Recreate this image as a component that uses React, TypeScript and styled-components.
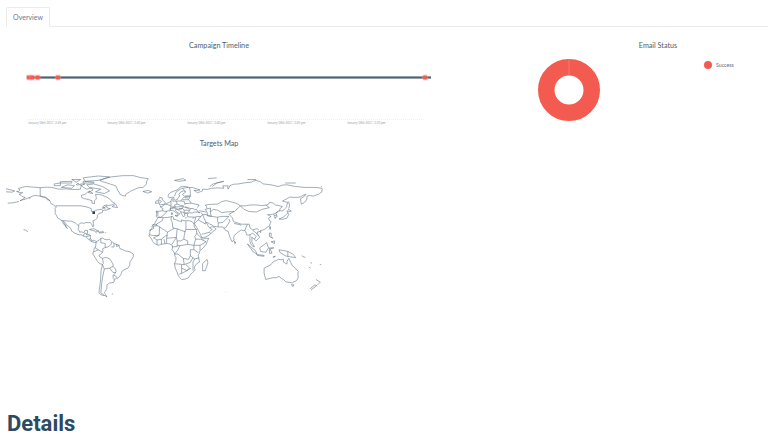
import React from 'react';
import styled, { createGlobalStyle } from 'styled-components';

const GlobalStyle = createGlobalStyle`
  html, body {
    margin: 0;
    padding: 0;
    height: 440px;
    overflow: hidden;
    background: #fff;
    font-family: Lato, "Open Sans", "Liberation Sans", sans-serif;
    color: #4a5b69;
  }
`;

const Page = styled.div`
  width: 768px;
  height: 440px;
  overflow: hidden;
`;

const TabBar = styled.div`
  display: flex;
  height: 27px;
  margin-left: 6px;
  padding-top: 7px;
  box-sizing: border-box;
  border-bottom: 1px solid #e8eaec;
`;

const Tab = styled.div`
  width: 44px;
  height: 20px;
  box-sizing: border-box;
  border: 1px solid #e8eaec;
  border-bottom: 1px solid #fff;
  border-radius: 2px 2px 0 0;
  background: #fff;
  font-size: 7px;
  line-height: 19px;
  text-align: center;
  color: #70797f;
`;

const ChartRow = styled.div`
  display: grid;
  grid-template-columns: 438px 330px;
  padding-top: 14px;
  height: 95px;
`;

const ChartTitle = styled.div<{ $offset?: number }>`
  height: 10px;
  padding-left: ${(p) => p.$offset ?? 0}px;
  font-size: 7.2px;
  line-height: 10px;
  text-align: center;
  color: #4f606e;
`;

const Plot = styled.svg`
  display: block;
`;

const DonutRow = styled.div`
  display: flex;
  align-items: flex-start;
  padding: 7px 0 0 99px;
`;

const Legend = styled.div`
  display: flex;
  align-items: center;
  gap: 4px;
  margin: 3px 0 0 103px;
  font-size: 5.2px;
  line-height: 8px;
  color: #5f6e7b;
`;

const LegendDot = styled.span`
  width: 8px;
  height: 8px;
  border-radius: 50%;
  background: #f35b50;
`;

const MapSection = styled.section`
  padding-top: 3px;
  width: 438px;
`;

const MapCanvas = styled.svg`
  display: block;
  margin-top: 21px;
  fill: none;
  stroke: #566b7d;
  stroke-width: 0.55;
  stroke-linejoin: round;
`;

const Heading = styled.h1`
  margin: 105px 0 0 7px;
  font-family: Roboto, "Liberation Sans", sans-serif;
  font-size: 22px;
  line-height: 28px;
  font-weight: 700;
  color: #2b4a63;
`;

const ticks = [
  { x: 28, label: 'January 18th 2017, 2:45 pm' },
  { x: 107, label: 'January 18th 2017, 2:50 pm' },
  { x: 187, label: 'January 18th 2017, 3:00 pm' },
  { x: 267, label: 'January 18th 2017, 3:05 pm' },
  { x: 347, label: 'January 18th 2017, 3:10 pm' },
];

const events = [29, 32.3, 37.7, 58, 425];

const Timeline = () => (
  <Plot width={438} height={79} viewBox="0 51 438 79">
    <rect x={26} y={76.5} width={3} height={2} fill="#c9ced2" />
    <rect x={28} y={76.4} width={403} height={2.2} fill="#4f6272" />
    {events.map((x) => (
      <g key={x}>
        <rect x={x - 3} y={74.5} width={6} height={6} rx={1} fill="#f9a8a1" opacity={0.4} />
        <rect x={x - 2} y={75.5} width={4} height={4} rx={0.8} fill="#f35b50" />
      </g>
    ))}
    <line x1={27} x2={424} y1={119.5} y2={119.5} stroke="#e3e6e8" strokeWidth={0.6} strokeDasharray="1 1" />
    {ticks.map((t) => (
      <text key={t.x} x={t.x} y={123.5} fontSize={3.1} fill="#98a2aa">
        {t.label}
      </text>
    ))}
  </Plot>
);

const Donut = () => (
  <Plot width={64} height={64} viewBox="0 0 64 64">
    <circle cx={32} cy={32} r={22.75} fill="none" stroke="#f35b50" strokeWidth={16.5} />
    <line x1={32} x2={32} y1={1} y2={17} stroke="#f8a49d" strokeWidth={0.4} />
  </Plot>
);

// plate carree: lon/lat traced by hand, scaled to the plot
const px = (lon: number) => 164 + lon * 0.878;
const py = (lat: number) => 248.8 - lat * 0.877;

const coasts = [
  // north america
  '-168,65.5 -164,67 -166,68.5 -157,71 -141,69.7 -128,70 -115,68 -108,68 -95,68 -94,72 -88,68 -82,69 -81,67 -87,64.5 -94,61 -94,58.7 -88,56.5 -82,55 -82,52 -79,51.5 -79,55 -77,57 -78,62 -70,61 -65,59 -60,55 -56,52 -60,50 -66,50 -70,47 -65,49 -65,47 -61,46 -66,44 -70,43.5 -70,41.5 -74,40.5 -76,38 -76,35 -81,32 -80,27 -81,25 -82.5,28 -84,30 -89,30 -94,29.5 -97,27.5 -98,22 -96,19 -91,18.5 -90,21 -87,21 -88,16 -84,15.5 -83.5,11 -81,9 -79,9.5 -77,8 -78,7 -80,7.5 -83,8.3 -86,11 -88,13 -92,14.5 -96,16 -102,18 -105,20 -106,23 -109,26 -112,29 -114.5,31.5 -112.5,27 -110,23 -112,25 -115,29 -117,32.5 -120.5,34.5 -122,37 -124,40 -124,46 -122.5,48 -125,49 -128,51 -130,55 -134,58 -140,60 -147,61 -152,59 -158,56.5 -164,54.7 -158,58.5 -162,60 -165,62 -161,64 -168,65.5',
  '-123,49 -95,49 -89,48 -83,46 -82.5,42.5 -79,43 -76,44.5 -71,45 -67.5,47 -67,45',
  '-141,69.7 -141,60 -135,59 -130,55',
  '-117,32.5 -108,31.5 -106,31.7 -101,29.5 -97,26',
  '-92,14.5 -91,17 -89,18 -88,16',
  '-89,14 -83.5,15',
  '-85.5,11 -83.7,11',
  '-83,8.3 -83,10',
  // south america
  '-77,8 -72,12 -68,11 -62,10.5 -57,6 -51,4 -50,0 -44,-2.5 -39,-3.5 -35,-6 -35,-9 -39,-15 -39,-18 -41,-22 -48,-25.5 -49,-29 -53,-33.5 -57,-34.5 -57,-38 -62,-39 -65,-41 -65,-45 -68,-50 -65,-55 -70,-53 -74,-50 -73,-42 -72,-30 -70,-18 -76,-14 -81,-6 -80,-2 -78,2 -77,8',
  '-72,12 -72,7 -67,6 -67,1.5',
  '-60,8 -60,5 -64,2 -67,1.5 -70,0 -70,-4 -74,-7.5 -73,-9.5 -70,-11 -65,-10 -60,-14 -58,-17 -58,-20 -55,-24 -54.5,-26 -57.5,-30 -53,-33.5',
  '-57,6 -57,2 -60,2',
  '-54,5.5 -54,2.5 -51,4',
  '-80,-3.5 -75,-1 -79,1.5',
  '-70,-4 -75,-1',
  '-70,-18 -68,-23 -70,-33 -71,-40 -72,-50 -68,-53',
  '-70,-11 -69,-17 -70,-18',
  '-68,-23 -62,-22 -58,-20',
  '-62,-22 -58,-27 -55,-27',
  '-58,-34 -58,-30',
  // greenland, arctic canada
  '-73,78 -60,82 -35,83.5 -18,80 -20,74 -24,70 -33,68 -42,63 -44,60 -50,62 -53,67 -55,72 -68,76 -73,78',
  '-62,66 -68,63 -78,65 -72,68 -85,70 -88,73 -80,74 -70,71 -62,66',
  '-117,70 -105,69 -102,72 -110,73 -117,70',
  '-125,72 -118,72 -118,75 -125,74 -125,72',
  '-90,77 -75,78 -62,82 -75,83 -92,81 -90,77',
  '-92,75 -80,75 -80,76 -92,77 -92,75',
  '-118,75 -105,75 -105,77 -118,76.5 -118,75',
  '-100,76 -95,79 -105,79 -100,76',
  '-95,72 -90,74 -95,74 -95,72',
  '-100,73 -96,73 -98,75 -100,73',
  '-86,64 -81,63 -85,66 -86,64',
  '-59,48 -53,47 -55,51 -59,48',
  // caribbean, pacific
  '-85,22 -80,23 -74,20 -78,20 -85,22',
  '-74,19 -69,19.5 -68.5,18.5 -74,18 -74,19',
  '-78,18.5 -76.5,18',
  '-67,18.4 -65.8,18.2',
  '-160,22 -158,21.4 -155,19.5',
  '-178,52 -172,52.5 -165,54',
  '-154,57.5 -152,58',
  '-180,68.5 -170,66 -173,64.5 -180,65',
  '-59.5,-51.5 -58,-51.5',
  // atlantic isles
  '-24,65.5 -18,66.5 -14,65 -19,63.5 -24,65.5',
  '-5,50 1,51 1.5,53 -2,56 -2,58 -5,58.5 -6,56 -3,54 -5,52 -5,50',
  '-10,52 -6,52 -6,55 -9,54.5 -10,52',
  // africa
  '-6,36 -1,35.5 10,37 11,33.5 15,32.5 20,31 20,33 25,32 32,31 34,28 35,24 37,21 39,16 43,12 44,11 51,12 48,5 40,-3 39,-7 40.5,-15 35,-20 35.5,-24 32.5,-27 28,-33 20,-35 18,-33 15,-27 12,-17 13.5,-10 12,-5 9,-1 9.5,4 4,6 -4,5 -8,4.5 -13,8.5 -17,14.5 -16,20 -13,27 -10,30 -6,36',
  '-1,35 -2,32 -8.7,28 -8.7,27',
  '-13,27.5 -8.7,27.5 -8.7,26 -12,26 -12,23 -17,21',
  '-8.7,27 -5,25 1,21 4,19 12,23.5',
  '-5,25 -5.5,15.5 -12,15 -16.5,16',
  '8.5,37 8,33 9.5,30 10,24 12,23.5',
  '12,23.5 14,23 24,19.5 25,22 25,31.5',
  '25,22 37,22',
  '24,20 23,15 22.5,11',
  '4,19 3,12 14,13 15,23',
  '14,13 15,9 19,9 22.5,11',
  '-5.5,15.5 -12,12.5 -8,10 -3,11 2,15 4,15',
  '3,12 3,6.5',
  '14,13 9,5',
  '15,9 15,2.5 9.5,2.2',
  '-3,5 -3,11',
  '1,6 0,11',
  '-8,4.5 -8,10',
  '15,4 18,3.5 27,5 34,4 36,11 35,14 38,18',
  '22.5,11 27,9 27,5',
  '36,11 42,11 48,8 41,4 34,4',
  '41,-1.5 41,4',
  '34,4 34,-1 39,-4.5',
  '34,-1 30,-1 30,-8 35,-11.5 40,-10.5',
  '18,3.5 16,-1 13,-5 12,-6 16,-6 22,-11 28,-12 30,-8',
  '12,-17 23,-18 22,-11',
  '20,-18 20,-28 17,-29',
  '23,-18 30,-15.5 33,-10',
  '35,-11.5 33,-15 33,-25',
  '20,-22 26,-25 29,-22 25,-18',
  '20,-28 26,-25 31,-22',
  '49,-12 50,-16 47,-25 44,-25 44,-17 49,-12',
  // eurasia
  '-9,37 -9,43 -2,43.5 -1,46 -4.5,48 -1,49 2,51 4,52 8,54 8.5,57 10.5,57 10,54 14,54 19,54.5 21,57 24,59 30,60 23,60 21,62 25,65 22,66 17,62 18,60 15,56 13,55.5 11,59 6,58 5,62 12,66 18,70 25,71 32,70 41,67 34,66.5 38,64 44,66 44,68 54,69 68,69 67,72 73,72 73,68 75,72 85,74 100,76 105,78 113,74 130,71 140,73 160,70 170,70 180,69 180,65 177,62.5 170,60 163,60 162,55 156.5,51 155.5,57 162,62 155,59 143,59 135,54.5 141,53 140,48 135,43 130,42.5 127.5,40 129,37 126.5,34.5 126,37 125,39.5 121,39 118,39 122,37 119,35 122,31 120,26 115,22.5 110,21 106,19 109,13 105,9 100,13.5 100,8 103,2 101,3 98,8 98,16 94,16 92,21 88,21.5 80,15 80,10 77.5,8 73,20 70,21 67,25 57,25.5 52,28 48,30 50,26 52,24 56,25 59.5,22.5 52,16 43,12.5 39,21 35,28 34.5,31 36,36 27,36.5 26.5,40 29,41 35,42 41,41 37,45 33,46 30,46 28,42 26,40.5 23,40 24,38 22,36.5 19,42 14,45 12.5,44 18,40 16,38 15.5,40 10,44 3,43 0,39 -2,37 -5.5,36 -9,37',
  '47,45 53,46.5 53,40 54,37 49.5,37.5 49,42 47,45',
  '30,60 28,56 31,52 40,50 38,47',
  '40,43.5 48,42',
  '49,46 47,50 61,51 70,55 78,53 87,49 98,50 106,50 117,50 120,53 127,50 135,48 131,43',
  '30,60 30,65 29,70',
  '12,60 14,65 20,69 28,70',
  '24,66 21,69',
  '53,42 56,45 61,44 66,41 70,42 80,42.5 85,47 87,49',
  '87,49 91,45 97,42.5 105,42 112,45 120,47 116,50',
  '80,42.5 74,39.5 78,35 79,31 88,28 97,28 98,24 101,21.5 106,23 108,21.5',
  '125,39.5 130,42.5',
  '126,38 128.5,38.5',
  '74,37 71,34 67,30 62,29.5 61.5,25',
  '74,34 75,31 70,24 68,23.5',
  '61,36 66,37 74,37',
  '61,36 61,31 62,29.5',
  '44,39 48,39 54,37 61,36',
  '44,39 46,34 48,30',
  '42,37 39,33 46,29 48,30',
  '42,37 36,36.5',
  '35,29 39,33',
  '46,29 48,28',
  '52,20 55,22 52,24',
  '43,17 45,17 52,19 53,17',
  '92,21 95,28',
  '98,16 101,18 105,14 103,11',
  '101,21 105,18 107,15',
  '80,29 88,27',
  '-2,43.5 3,42.5',
  '2,51 8,49 7,44',
  '8,49 8,54',
  '14,54 15,51',
  '15,51 12,50 13,48 8,47.5',
  '7,44 7,46 13,46.5 13.5,45.5',
  '19,54.5 23,54 24,50',
  '15,51 19,49.5 22.5,49',
  '9.5,47 17,48',
  '17,48 22,48 21,46 17,46',
  '22,48 28,46',
  '21,46 23,44 29,44',
  '23,44 23,41 26,41',
  '19,42 21,42 23,41',
  '13.5,45.5 19,45 21,46',
  '21,56 28,56',
  '24,58 28,58',
  '24,51.5 31,52',
  '24,48 30,46',
  '-9,42 -7,42 -7,37',
  '42,37 44,39 42,41.5',
  // asia-pacific islands
  '95,5.5 104,-2 106,-6 102,-4 95,5.5',
  '105,-6.5 114,-7.5 114,-8.5 106,-7.5',
  '109,1 117,7 119,1 116,-4 110,-3 109,1',
  '120,1 125,1 121,0 123,-5 120,-5 120,1',
  '131,-1 141,-3 147,-6 150,-10 143,-9 138,-8 132,-4 131,-1',
  '141,-3 141,-9',
  '120,18 122,18 122,14 124,12 120,14 120,18',
  '122,8 126,9 126,6 122,8',
  '120,25 121.5,25 121,22 120,25',
  '131,34 136,36 140,40 141,41 142,39 140,35 135,33.5 131,34',
  '140,42 142,45 145,43 141,42 140,42',
  '142,54 143,49 142,46',
  '80,9 82,7 80.5,6 80,9',
  '109,20 110.5,20 110,18.5 109,20',
  '124,-9 127,-8.5 124,-10',
  '114,-22 122,-18 126,-14 130,-12 136,-12 136,-15 140,-17.5 142,-11 146,-19 153,-26 153,-32 150,-37 146,-39 140,-38 136,-35 131,-31.5 124,-33 116,-35 115,-32 114,-22',
  '145,-41 148,-41 147,-43 145,-41',
  '173,-35 178,-38 175,-41',
  '172,-41 174,-42 168,-46.5 167,-45 172,-41',
  '165,-21 167,-22',
  '177.5,-18 179,-18',
  '157,-8 161,-10',
  '167,-15 168,-17',
  '70,-49 70.5,-49.5',
  // far north
  '12,78 22,80 25,78 17,77 12,78',
  '52,71 56,74 68,77 60,75 55,71',
  '50,80 60,81',
  '95,79 105,79',
  '138,75 150,75',
  '179,71 180,71',
  // mediterranean
  '12.5,38 15.5,38 15,36.7 12.5,38',
  '8.3,41 9.7,41 9.5,39 8.5,39 8.3,41',
  '24,35.3 26,35.2',
  '32.5,35 34.5,35.5',
];

// long coastlines get a small wobble so they don't read as straight chords
const wobble = (a: number, b: number) => (Math.sin(a * 12.9 + b * 78.2) * 43758.5) % 1;

const toPoints = (line: string) => {
  const pts = line.split(' ').map((pair) => {
    const [lon, lat] = pair.split(',').map(Number);
    return [px(lon), py(lat)];
  });
  const rough = pts.length > 12;
  const out: string[] = [];
  pts.forEach(([x, y], i) => {
    const next = pts[i + 1];
    out.push(`${x.toFixed(1)},${y.toFixed(1)}`);
    if (rough && next && Math.hypot(next[0] - x, next[1] - y) > 3) {
      const mx = (x + next[0]) / 2 + wobble(x, y) * 0.7;
      const my = (y + next[1]) / 2 + wobble(y, x) * 0.7;
      out.push(`${mx.toFixed(1)},${my.toFixed(1)}`);
    }
  });
  return out.join(' ');
};

const WorldMap = () => (
  <MapCanvas width={340} height={135} viewBox="0 170 340 135">
    {coasts.map((line) => (
      <polyline key={line} points={toPoints(line)} />
    ))}
    <rect x={92.4} y={211.4} width={2.6} height={2.6} fill="#2b4256" stroke="none" />
  </MapCanvas>
);

const App = () => (
  <Page>
    <GlobalStyle />
    <TabBar>
      <Tab>Overview</Tab>
    </TabBar>
    <ChartRow>
      <div>
        <ChartTitle>Campaign Timeline</ChartTitle>
        <Timeline />
      </div>
      <div>
        <ChartTitle $offset={110}>Email Status</ChartTitle>
        <DonutRow>
          <Donut />
          <Legend>
            <LegendDot />
            Success
          </Legend>
        </DonutRow>
      </div>
    </ChartRow>
    <MapSection>
      <ChartTitle>Targets Map</ChartTitle>
      <WorldMap />
    </MapSection>
    <Heading>Details</Heading>
  </Page>
);

export default App;
